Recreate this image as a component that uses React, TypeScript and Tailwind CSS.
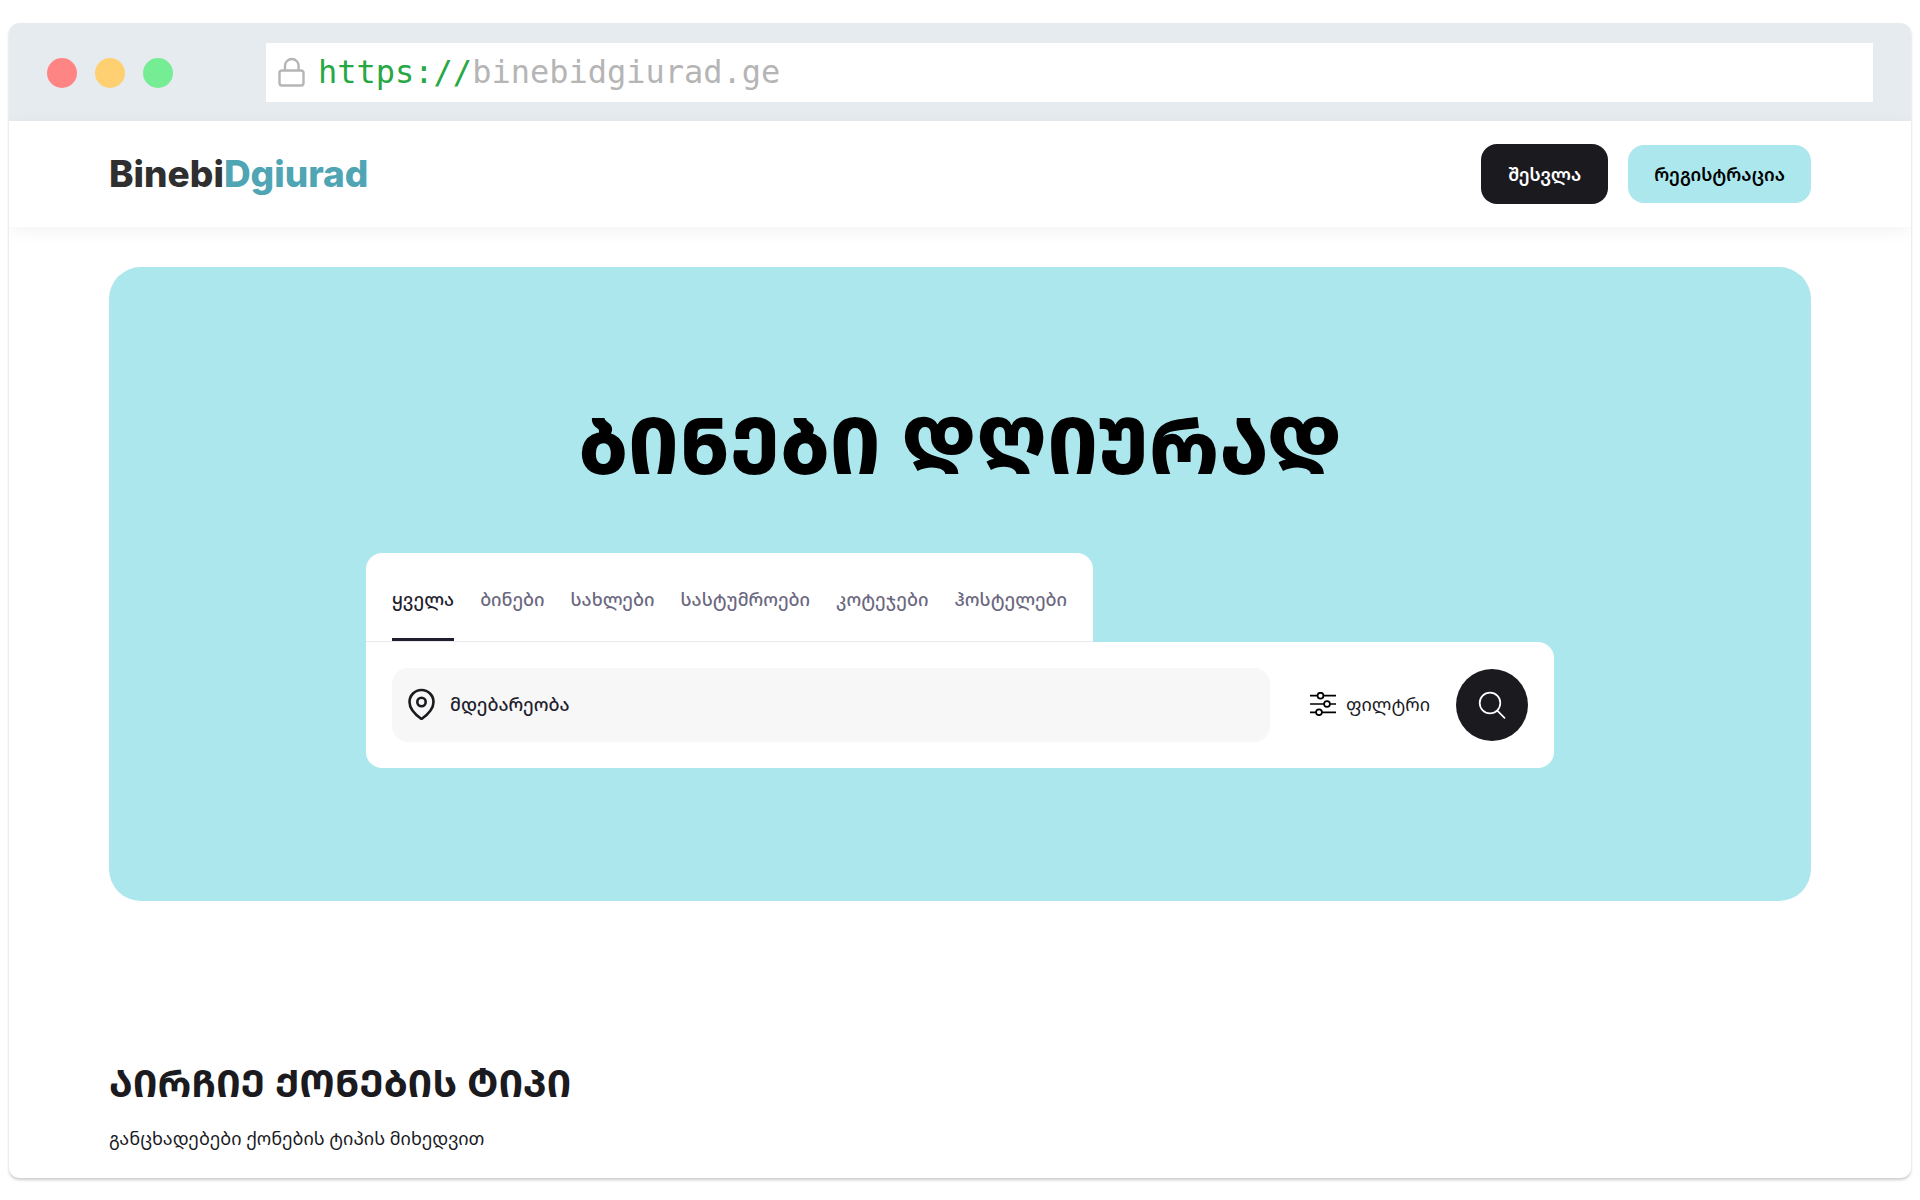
import { ReactNode, useState } from "react";

const tabs = ["ყველა", "ბინები", "სახლები", "სასტუმროები", "კოტეჯები", "ჰოსტელები"];

const LockIcon = () => (
	<svg className="h-[30px] w-7 shrink-0" viewBox="0 0 28 30" fill="none" stroke="#b5b5b5" strokeWidth="2.4" aria-hidden="true">
		<rect x="1.500" y="13.500" width="24" height="15" rx="2.5" />
		<path d="M7 13.500V8.800a6.800 6.800 0 0 1 13.600 0V13.500" />
	</svg>
);

const PinIcon = () => (
	<svg className="h-8 w-7 shrink-0" viewBox="0 0 28 32" fill="none" stroke="#1a1a1f" strokeWidth="2.6" strokeLinejoin="round" aria-hidden="true">
		<path d="M13.500 31C9.500 28.200 1.500 21.800 1.500 14a12 12 0 0 1 24 0C25.500 21.800 17.500 28.200 13.500 31Z" />
		<circle cx="13.500" cy="14" r="4.200" />
	</svg>
);

const FilterIcon = () => (
	<svg className="h-6 w-[26px] shrink-0" viewBox="0 0 26 24" fill="none" stroke="black" strokeWidth="1.700" aria-hidden="true">
		<path d="M0 3.700h7.500M13.500 3.700H26M0 12h14M20 12h6M0 20.300h6M12 20.300h14" />
		<circle cx="10.500" cy="3.700" r="2.900" />
		<circle cx="17" cy="12" r="2.900" />
		<circle cx="9" cy="20.300" r="2.900" />
	</svg>
);

const SearchIcon = () => (
	<svg className="size-7" viewBox="0 0 28 28" fill="none" stroke="white" strokeWidth="1.700" strokeLinecap="round" aria-hidden="true">
		<circle cx="12" cy="12" r="10.300" />
		<path d="M19.300 19.700l7.200 7.200" />
	</svg>
);

interface FrameProps {
	children: ReactNode;
}

const BrowserFrame = ({ children }: FrameProps) => (
	<div className="mx-[9px] overflow-hidden rounded-[10px] bg-white shadow-[0_2px_3px_rgba(0,0,0,0.2)]">
		<div className="flex items-center bg-[#e6ebef] px-[38px] pt-5 pb-[19px]">
			<div className="flex gap-[18px]">
				<span className="size-[30px] rounded-full bg-[#ff8585]" />
				<span className="size-[30px] rounded-full bg-[#ffd071]" />
				<span className="size-[30px] rounded-full bg-[#74ed94]" />
			</div>
			<div className="ml-[93px] flex h-[59px] grow items-center gap-3 bg-white px-3 pb-[2px] font-['DejaVu_Sans_Mono',monospace] text-[32px] leading-none text-[#b5b5b5]">
				<LockIcon />
				<span>
					<span className="text-[#27a844]">https://</span>binebidgiurad.ge
				</span>
			</div>
		</div>
		{children}
	</div>
);

const Header = () => (
	<header className="flex h-[106px] items-center justify-between px-[100px] shadow-[0_4px_16px_rgba(0,0,0,0.05)]">
		<a href="#" className="font-['Inter',sans-serif] text-[37px] font-extrabold text-[#2f2f2f]">
			Binebi<span className="text-[#4fa5b3]">Dgiurad</span>
		</a>
		<div className="flex items-center gap-5">
			<button className="h-[60px] rounded-2xl bg-[#1a1a1f] px-[27px] text-lg font-semibold text-white">შესვლა</button>
			<button className="h-[58px] rounded-2xl bg-[#ace7ee] px-[26px] text-lg font-semibold text-black">რეგისტრაცია</button>
		</div>
	</header>
);

const SearchPanel = () => {
	const [active, setActive] = useState(tabs[0]);

	return (
		<form className="mx-auto flex w-full max-w-[1188px] flex-col items-start" onSubmit={(e) => e.preventDefault()}>
			<div className="flex h-[89px] gap-[26px] rounded-t-2xl border-b border-[#ebebee] bg-white px-[26px]">
				{tabs.map((tab) => (
					<button
						key={tab}
						type="button"
						onClick={() => setActive(tab)}
						className={`border-b-[3px] pt-[6px] text-lg font-medium ${active === tab ? "border-[#221d2e] text-[#221d2e]" : "border-transparent text-[#6b687f]"}`}
					>
						{tab}
					</button>
				))}
			</div>
			<div className="flex w-full items-center rounded-2xl rounded-tl-none bg-white p-[26px]">
				<label className="flex h-[74px] grow items-center gap-[14px] rounded-2xl bg-[#f7f7f7] px-4 pb-[3px]">
					<PinIcon />
					<input
						aria-label="მდებარეობა"
						placeholder="მდებარეობა"
						className="grow bg-transparent text-lg font-medium outline-none placeholder:text-[#221d2e]"
					/>
				</label>
				<button type="button" className="ml-10 flex items-center gap-[10px] pb-[3px] text-lg text-[#1a1a1f]">
					<FilterIcon />
					ფილტრი
				</button>
				<button aria-label="ძებნა" className="ml-[26px] flex size-[72px] items-center justify-center rounded-full bg-[#1a1a1f]">
					<SearchIcon />
				</button>
			</div>
		</form>
	);
};

const App = () => (
	<div className="min-h-screen bg-white pt-[23px] font-['Noto_Sans_Georgian','Noto_Sans','DejaVu_Sans',sans-serif]">
		<BrowserFrame>
			<Header />
			<main className="px-[100px] pt-10 pb-[26px]">
				<section className="rounded-[32px] bg-[#ace7ee] px-6 pt-[127px] pb-[133px]">
					<h1 className="mb-[59px] text-center text-[78px] leading-[100px] font-extrabold text-black">ᲑᲘᲜᲔᲑᲘ ᲓᲦᲘᲣᲠᲐᲓ</h1>
					<SearchPanel />
				</section>
				<section className="mt-[155px] text-[#1a1a1f]">
					<h2 className="text-[38px] leading-[52px] font-bold">ᲐᲘᲠᲩᲘᲔ ᲥᲝᲜᲔᲑᲘᲡ ᲢᲘᲞᲘ</h2>
					<p className="mt-4 text-lg">განცხადებები ქონების ტიპის მიხედვით</p>
				</section>
			</main>
		</BrowserFrame>
	</div>
);

export default App;
